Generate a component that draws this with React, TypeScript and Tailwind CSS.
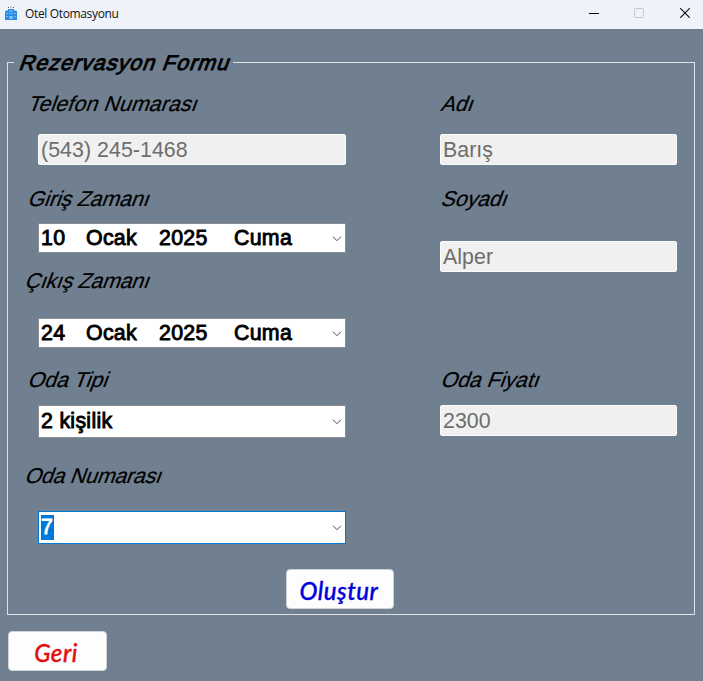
import type { ReactNode } from "react";

const sans = "font-['Liberation_Sans',Arial,sans-serif] text-[21.33px] leading-6";

function Label({ className, children }: { className: string; children: ReactNode }) {
  return (
    <label className={`block h-6 w-fit shrink-0 origin-[0_19px] -skew-x-[20deg] whitespace-nowrap text-black [-webkit-text-stroke:0.2px_currentColor] ${sans} ${className}`}>
      {children}
    </label>
  );
}

function DisabledField({ className, children }: { className: string; children: ReactNode }) {
  return (
    <div className={`flex h-[31px] shrink-0 items-center rounded-[2px] border border-[#fafbfd] bg-[#f0f0f0] px-[2px] text-[#6d6d6d] ${sans} ${className}`}>
      <span className="whitespace-nowrap tracking-[0.06px]">{children}</span>
    </div>
  );
}

function Chevron() {
  return (
    <svg className="ml-auto mr-[3px] mt-[2px] shrink-0" width="10" height="6" viewBox="0 0 10 6" fill="none" stroke="#4a4a4a">
      <path d="M1 0.7 5 4.7 9 0.7" />
    </svg>
  );
}

const boldText = "whitespace-pre text-black [-webkit-text-stroke:0.9px_currentColor] tracking-[0.3px]";

function DateField({ className, day }: { className: string; day: string }) {
  return (
    <div className={`ml-[30px] flex h-[30px] w-[308px] shrink-0 items-center border border-[#8a8d91] bg-white pl-[2px] ${sans} ${className}`}>
      <span className={`w-[45px] ${boldText}`}>{day}</span>
      <span className={`w-[73px] ${boldText}`}>Ocak</span>
      <span className={`w-[75px] ${boldText}`}>2025</span>
      <span className={boldText}>Cuma</span>
      <Chevron />
    </div>
  );
}

function TitleBar() {
  return (
    <header className="flex h-[29px] shrink-0 items-center bg-[#eff3f9] font-['Open_Sans','Noto_Sans',sans-serif] text-[12px] text-[#111]">
      <svg className="ml-[5px] mt-[-4px] shrink-0" width="12" height="14" viewBox="0 0 12 14">
        <path d="M0 5.5 1 4.5h2V3h6v1.5h2l1 1V14H0z" fill="#2b8ce6" />
        <path d="M3 1h1v1H3zM5.5 0.5h1v1h-1zM8 1h1v1H8z" fill="#3d5f86" />
        <path d="M1.5 7h1.5v1H1.5zM4 7h1.5v1H4zM6.5 7H8v1H6.5zM9 7h1.5v1H9zM1.5 10h1.5v1H1.5zM9 10h1.5v1H9zM4.5 10h3v3h-3zM4 4.5h4v1H4z" fill="#8cc8ff" />
      </svg>
      <span className="ml-2 mt-[-2px] whitespace-nowrap tracking-[-0.35px]">Otel Otomasyonu</span>
      <div className="ml-auto flex items-center pr-[13px]">
        <svg width="10" height="10" viewBox="0 0 10 10" stroke="#000" className="mr-[35px] mt-[-2px]">
          <path d="M0 4.5h10" />
        </svg>
        <svg width="10" height="10" viewBox="0 0 10 10" fill="none" stroke="#c3c6cb" className="mr-[36px] mt-[-3px]">
          <rect x="0.5" y="0.5" width="9" height="9" rx="0.8" />
        </svg>
        <svg width="10" height="10" viewBox="0 0 10 10" stroke="#111" strokeWidth="1.2" className="mt-[-3px]">
          <path d="M0.2 0.2 9.8 9.8M9.8 0.2 0.2 9.8" />
        </svg>
      </div>
    </header>
  );
}

const button =
  "flex h-10 items-center justify-center rounded-[4px] border border-[#d0d2d5] bg-[#fdfdfd] font-['Lato',sans-serif] text-[24px] font-medium italic [-webkit-text-stroke:0.35px_currentColor]";

export default function App() {
  return (
    <div className="flex h-[681px] w-[703px] flex-col overflow-hidden bg-[#708090]">
      <TitleBar />
      <fieldset className="ml-[7px] mt-[22px] h-[564px] w-[688px] min-w-0 shrink-0 border border-[#dce1e6]">
        <legend className="ml-[6px] h-[23px] w-[219px]">
          <span className={`block origin-[0_19px] -skew-x-[20deg] whitespace-nowrap pl-[4px] text-black tracking-[1.08px] [-webkit-text-stroke:0.9px_currentColor] ${sans}`}>
            Rezervasyon Formu
          </span>
        </legend>
        <div className="flex pt-[18px]">
          <section className="flex w-[432px] flex-col">
            <Label className="ml-[19px] tracking-[0.12px]">Telefon Numarası</Label>
            <DisabledField className="ml-[30px] mt-[18px] w-[308px]">(543) 245-1468</DisabledField>
            <Label className="ml-[19px] mt-[22px] tracking-[-0.1px]">Giriş Zamanı</Label>
            <DateField className="mt-[12px]" day="10" />
            <Label className="ml-[16px] mt-[16px] tracking-[-0.25px]">Çıkış Zamanı</Label>
            <DateField className="mt-[25px]" day="24" />
            <Label className="ml-[19px] mt-[20px]">Oda Tipi</Label>
            <div className={`ml-[30px] mt-[13px] flex h-[33px] w-[308px] shrink-0 items-center border border-[#8a8d91] bg-white pb-px pl-[2px] ${sans}`}>
              <span className={boldText}>2 kişilik</span>
              <Chevron />
            </div>
            <Label className="ml-[16px] mt-[26px] tracking-[-0.22px]">Oda Numarası</Label>
            <div className={`ml-[30px] mt-[23px] flex h-[33px] w-[308px] shrink-0 items-center border border-[#0078d7] bg-white pb-px pl-[2px] ${sans}`}>
              <span className="h-[25px] w-[13px] bg-[#0078d7] text-white [-webkit-text-stroke:0.9px_currentColor]">7</span>
              <Chevron />
            </div>
          </section>
          <section className="flex w-[237px] flex-col">
            <Label>Adı</Label>
            <DisabledField className="mt-[18px] w-[237px]">Barış</DisabledField>
            <Label className="mt-[22px] tracking-[-0.1px]">Soyadı</Label>
            <DisabledField className="mt-[30px] w-[237px]">Alper</DisabledField>
            <Label className="mt-[96px] tracking-[-0.05px]">Oda Fiyatı</Label>
            <DisabledField className="mt-[13px] w-[237px]">2300</DisabledField>
          </section>
        </div>
        <button className={`ml-[278px] mt-[25px] w-[108px] pr-[2px] pt-[3px] tracking-[0.5px] text-[#0000dc] ${button}`}>Oluştur</button>
      </fieldset>
      <button className={`ml-2 mt-4 w-[99px] shrink-0 pr-[3px] pt-[3px] tracking-[0.5px] text-[#e01010] ${button}`}>Geri</button>
    </div>
  );
}
